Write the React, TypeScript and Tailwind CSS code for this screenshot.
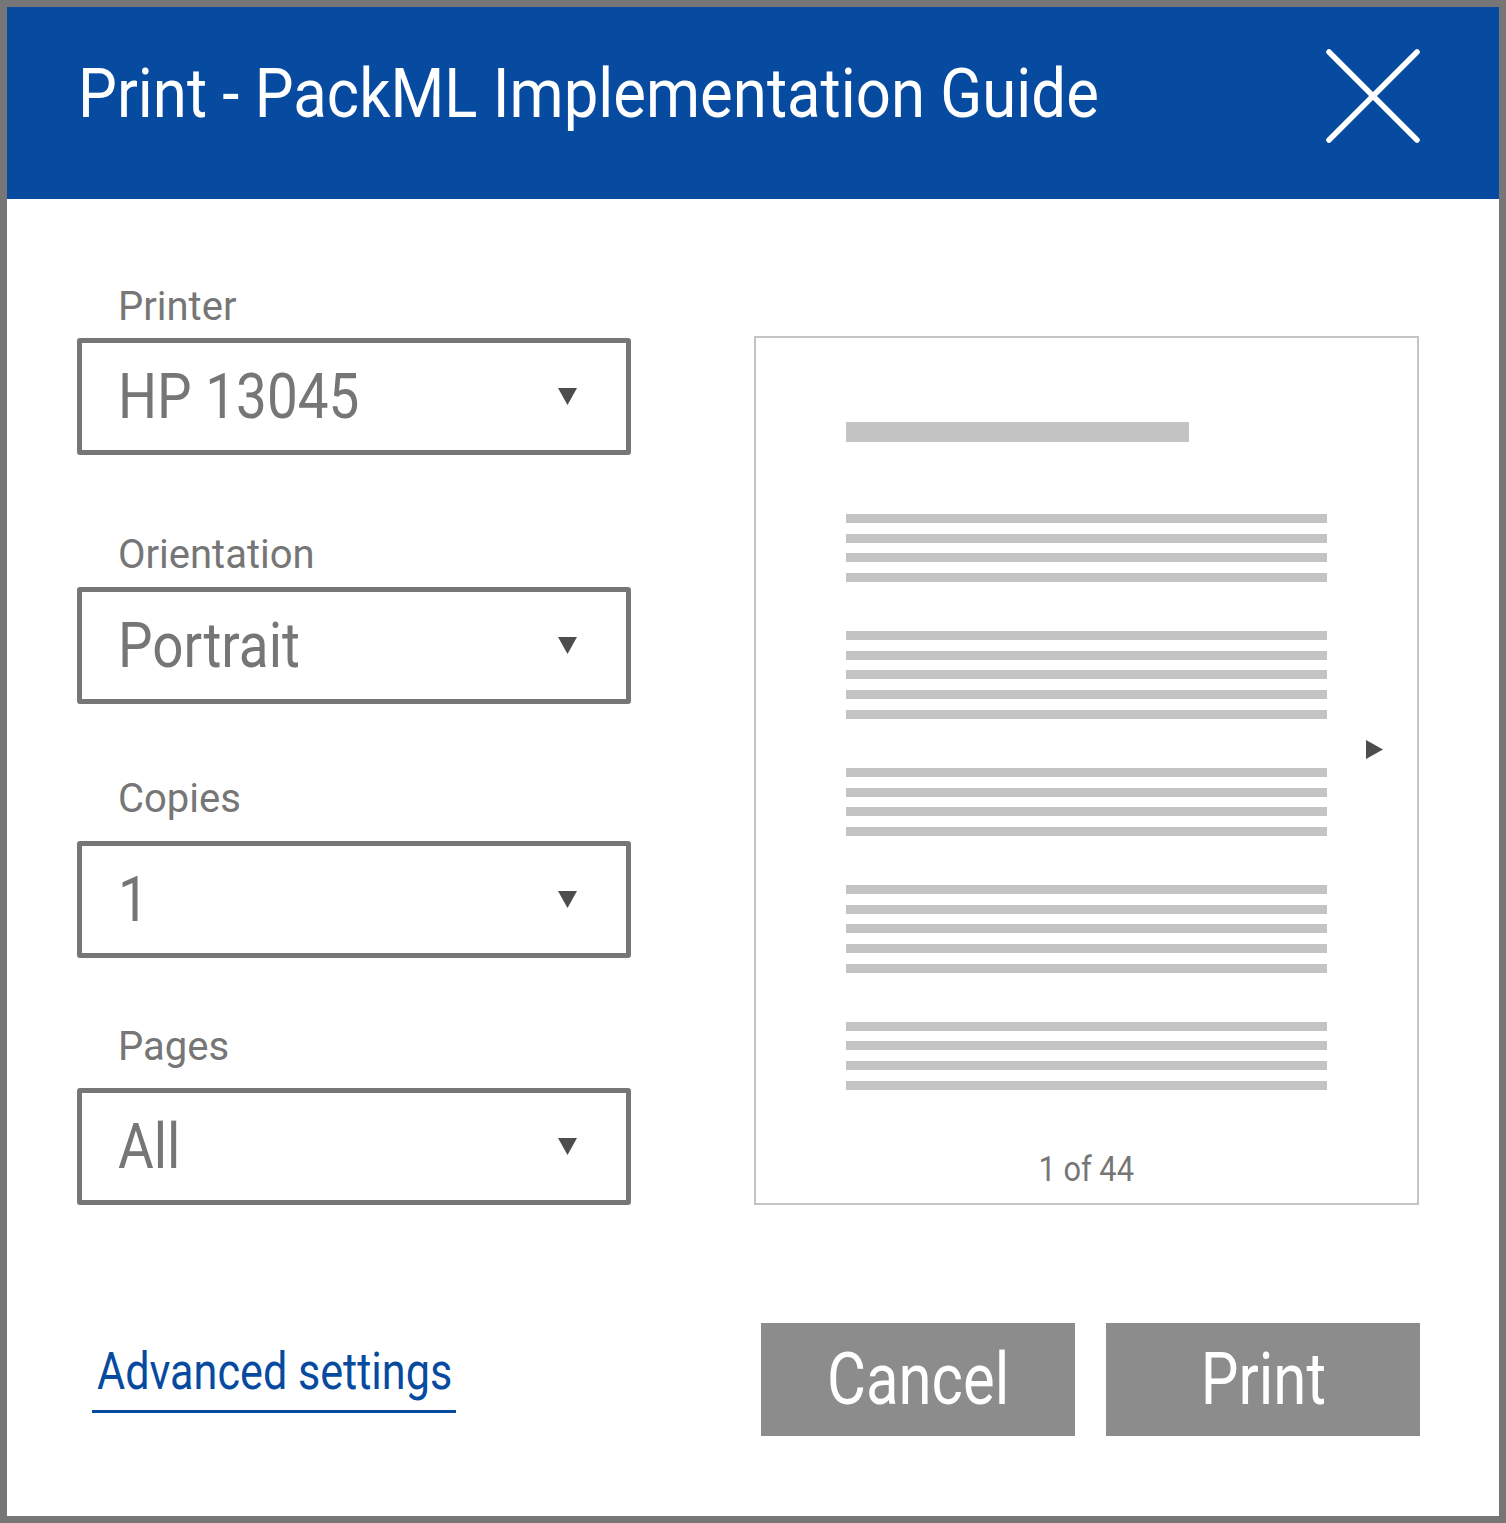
import React from "react";

function Caret() {
  return (
    <svg width="19" height="17" viewBox="0 0 19 17" className="shrink-0">
      <polygon points="0,0 19,0 9.5,17" fill="#4d4d4d" />
    </svg>
  );
}

function Field({
  label,
  value,
  labelMt,
  labelMb,
}: {
  label: string;
  value: string;
  labelMt: string;
  labelMb: string;
}) {
  return (
    <div className="flex flex-col">
      <div className={`${labelMt} ${labelMb} ml-[41px] h-[41px] whitespace-nowrap text-[40px] leading-none text-[#767676]`}>
        {label}
      </div>
      <div className="flex h-[117px] w-[554px] items-center justify-between rounded-[3px] border-[5px] border-[#767676] pl-[36px] pr-[49px]">
        <span className="inline-block origin-left scale-x-[0.87] whitespace-nowrap text-[63px] leading-none text-[#767676]">
          {value}
        </span>
        <Caret />
      </div>
    </div>
  );
}

function Bars({ n }: { n: number }) {
  return (
    <div className="flex flex-col gap-[10.7px]">
      {Array.from({ length: n }).map((_, i) => (
        <div key={i} className="h-[9px] w-[481px] bg-[#c4c4c4]" />
      ))}
    </div>
  );
}

export default function App() {
  return (
    <div className="flex h-[1523px] w-[1506px] flex-col border-[7px] border-[#767676] bg-white font-[Roboto,sans-serif]">
      <div className="flex h-[192px] shrink-0 items-start justify-between bg-[#074ba0] pl-[71px] pr-[78px]">
        <div className="mt-[52px] h-[69px] text-[69px] leading-none text-white">
          <span className="inline-block origin-left scale-x-[0.894] whitespace-nowrap">
            Print - PackML Implementation Guide
          </span>
        </div>
        <svg width="96" height="96" viewBox="0 0 96 96" className="mt-[41px]">
          <line x1="4" y1="4" x2="92" y2="92" stroke="white" strokeWidth="5.5" strokeLinecap="round" />
          <line x1="92" y1="4" x2="4" y2="92" stroke="white" strokeWidth="5.5" strokeLinecap="round" />
        </svg>
      </div>

      <div className="flex flex-1 flex-col">
        <div className="flex">
          <div className="ml-[70px] flex flex-col">
            <Field label="Printer" value="HP 13045" labelMt="mt-[88px]" labelMb="mb-[10px]" />
            <Field label="Orientation" value="Portrait" labelMt="mt-[80px]" labelMb="mb-[11px]" />
            <Field label="Copies" value="1" labelMt="mt-[75px]" labelMb="mb-[21px]" />
            <Field label="Pages" value="All" labelMt="mt-[69px]" labelMb="mb-[20px]" />
          </div>

          <div className="relative ml-[123px] mt-[137px] flex h-[869px] w-[665px] flex-col border-2 border-[#c4c4c4] pl-[90px] pt-[84px]">
            <div className="h-[20px] w-[343px] bg-[#c4c4c4]" />
            <div className="mt-[72px] flex flex-col gap-[49px]">
              <Bars n={4} />
              <Bars n={5} />
              <Bars n={4} />
              <Bars n={5} />
              <Bars n={4} />
            </div>
            <div className="-ml-[90px] mt-[62px] h-[35px] text-center text-[35px] leading-none text-[#767676]">
              <span className="inline-block scale-x-[0.88] whitespace-nowrap">1 of 44</span>
            </div>
            <svg
              width="17"
              height="19"
              viewBox="0 0 17 19"
              className="absolute left-[610px] top-[402px]"
            >
              <polygon points="0,0 17,9.5 0,19" fill="#4d4d4d" />
            </svg>
          </div>
        </div>

        <div className="mt-[118px] flex items-start">
          <div className="ml-[85px] mt-[23px] w-[364px] border-b-[3px] border-[#074ba0] pb-[12px] pl-[5px]">
            <div className="h-[52px] text-[52px] leading-none text-[#074ba0]">
              <span className="inline-block origin-left scale-x-[0.83] whitespace-nowrap">Advanced settings</span>
            </div>
          </div>
          <div className="ml-auto mr-[79px] flex gap-[31px]">
            <div className="flex h-[113px] w-[314px] items-center justify-center bg-[#8c8c8c] text-[73px] leading-none text-white">
              <span className="inline-block scale-x-[0.82] whitespace-nowrap">Cancel</span>
            </div>
            <div className="flex h-[113px] w-[314px] items-center justify-center bg-[#8c8c8c] text-[73px] leading-none text-white">
              <span className="inline-block scale-x-[0.82] whitespace-nowrap">Print</span>
            </div>
          </div>
        </div>
      </div>
    </div>
  );
}
